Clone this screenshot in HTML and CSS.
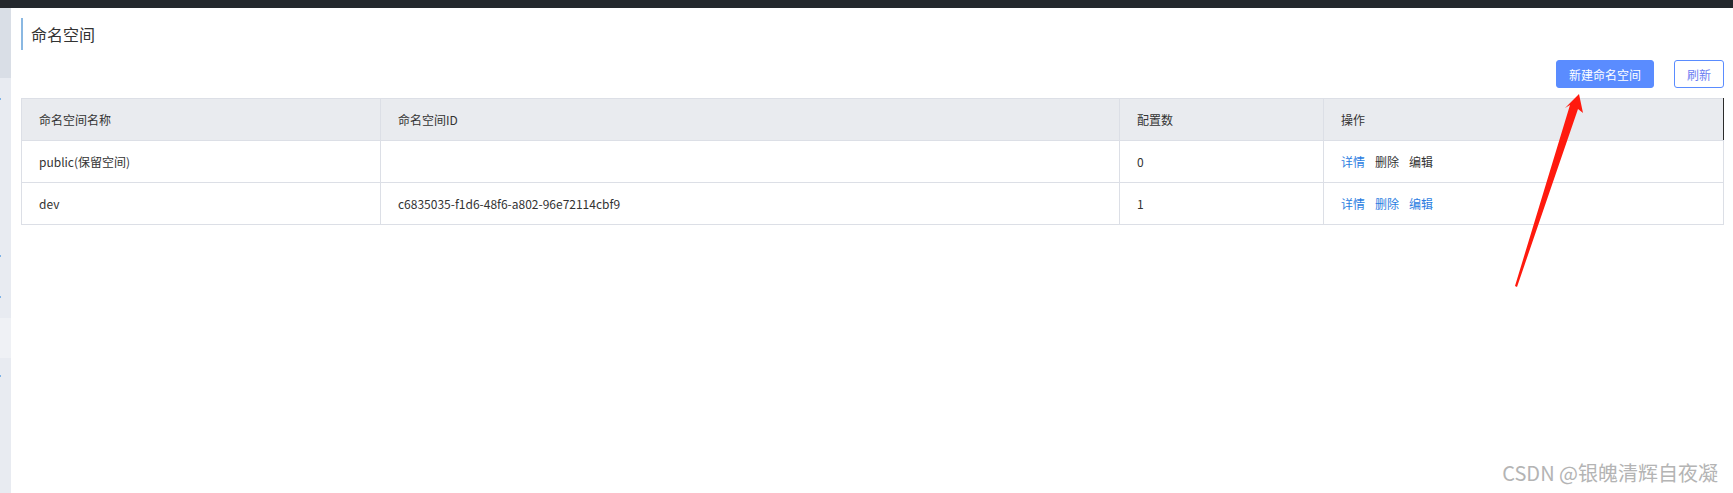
FILE: index.html
```html
<!DOCTYPE html>
<html lang="zh-CN">
<head>
<meta charset="utf-8">
<title>命名空间</title>
<link rel="stylesheet" href="styles.css">
</head>
<body>
<div class="topbar"></div>
<div class="layout">
  <aside class="sidebar">
    <div class="sb-top"></div>
    <div class="sb-item"><span class="dot"></span></div>
    <div class="sb-item sb-mid"><span class="dot d1"></span><span class="dot d2"></span></div>
    <div class="sb-item sb-light"></div>
    <div class="sb-item sb-rest"><span class="dot d3"></span></div>
  </aside>
  <main class="main">
    <h1 class="title">命名空间</h1>
    <div class="toolbar">
      <button class="btn btn-primary">新建命名空间</button>
      <button class="btn btn-default">刷新</button>
    </div>
    <table class="grid">
      <colgroup>
        <col class="c1"><col class="c2"><col class="c3"><col class="c4">
      </colgroup>
      <thead>
        <tr><th>命名空间名称</th><th>命名空间ID</th><th>配置数</th><th class="last">操作</th></tr>
      </thead>
      <tbody>
        <tr>
          <td>public(保留空间)</td><td></td><td>0</td>
          <td><span class="link">详情</span><span class="link off">删除</span><span class="link off">编辑</span></td>
        </tr>
        <tr>
          <td>dev</td><td>c6835035-f1d6-48f6-a802-96e72114cbf9</td><td>1</td>
          <td><span class="link">详情</span><span class="link">删除</span><span class="link">编辑</span></td>
        </tr>
      </tbody>
    </table>
  </main>
</div>
<svg class="arrow" width="1733" height="493" viewBox="0 0 1733 493" xmlns="http://www.w3.org/2000/svg">
  <polygon points="1579,94 1583,113 1578,109 1517,287 1515,286 1570,105 1565,108" fill="#ff1a0e"/>
</svg>
<div class="watermark">CSDN @银魄清辉自夜凝</div>
</body>
</html>
```
FILE: styles.css
```css
html, body {
  margin: 0;
  padding: 0;
  background: #fff;
  font-family: "Noto Sans CJK SC", "Noto Sans", sans-serif;
  color: #333;
}
body {
  width: 1733px;
  height: 493px;
  overflow: hidden;
  position: relative;
}
.topbar {
  height: 8px;
  background: #24282d;
}
.layout {
  display: flex;
  height: 485px;
}
.sidebar {
  width: 11px;
  flex: none;
  display: flex;
  flex-direction: column;
  background: #e8ebf1;
}
.sb-top {
  height: 70px;
  background: #d9dee6;
}
.sb-item {
  position: relative;
}
.sb-item:nth-child(2) { height: 140px; }
.sb-mid { height: 100px; }
.sb-light { height: 40px; background: #eff1f5; }
.sb-rest { flex: 1; }
.dot {
  position: absolute;
  left: 0;
  width: 1px;
  height: 2px;
  background: #7fb3e6;
}
.sb-item:nth-child(2) .dot { top: 20px; }
.d1 { top: 37px; }
.d2 { top: 78px; }
.d3 { top: 17px; }

.main {
  flex: 1;
  padding: 0 9px 0 10px;
}
.title {
  margin: 10px 0 0 0;
  height: 32px;
  line-height: 32px;
  border-left: 2px solid #8ab8e2;
  padding-left: 8px;
  font-size: 16px;
  font-weight: normal;
  color: #333;
}
.toolbar {
  display: flex;
  justify-content: flex-end;
  gap: 20px;
  margin-top: 10px;
  height: 28px;
}
.btn {
  height: 28px;
  font-family: inherit;
  font-size: 12px;
  border-radius: 3px;
  padding: 0;
  cursor: pointer;
}
.btn-primary {
  width: 98px;
  background: #5a8cff;
  border: 1px solid #5a8cff;
  color: #fff;
}
.btn-default {
  width: 50px;
  background: #fff;
  border: 1px solid #5a8cff;
  color: #6b7ef2;
}
.grid {
  margin-top: 10px;
  width: 100%;
  border-collapse: collapse;
  table-layout: fixed;
  font-size: 12px;
}
.c1 { width: 359px; }
.c2 { width: 739px; }
.c3 { width: 204px; }
.c4 { width: auto; }
.grid th, .grid td {
  height: 42px;
  padding: 0 0 0 17px;
  border: 1px solid #dcdfe6;
  text-align: left;
  font-weight: normal;
  color: #333;
  box-sizing: border-box;
}
.grid th {
  background: #e9ebef;
}
.grid th.last {
  border-right-color: #2b2b2b;
}
.link {
  color: #2b7de1;
  margin-right: 10px;
}
.link.off {
  color: #333;
}
.arrow {
  position: absolute;
  left: 0;
  top: 0;
  pointer-events: none;
}
.watermark {
  position: absolute;
  right: 15px;
  bottom: 6px;
  font-size: 20px;
  color: #b4b4b4;
  text-shadow: 0 0 1px #fff, 1px 1px 0 #fff;
  white-space: nowrap;
}
```
